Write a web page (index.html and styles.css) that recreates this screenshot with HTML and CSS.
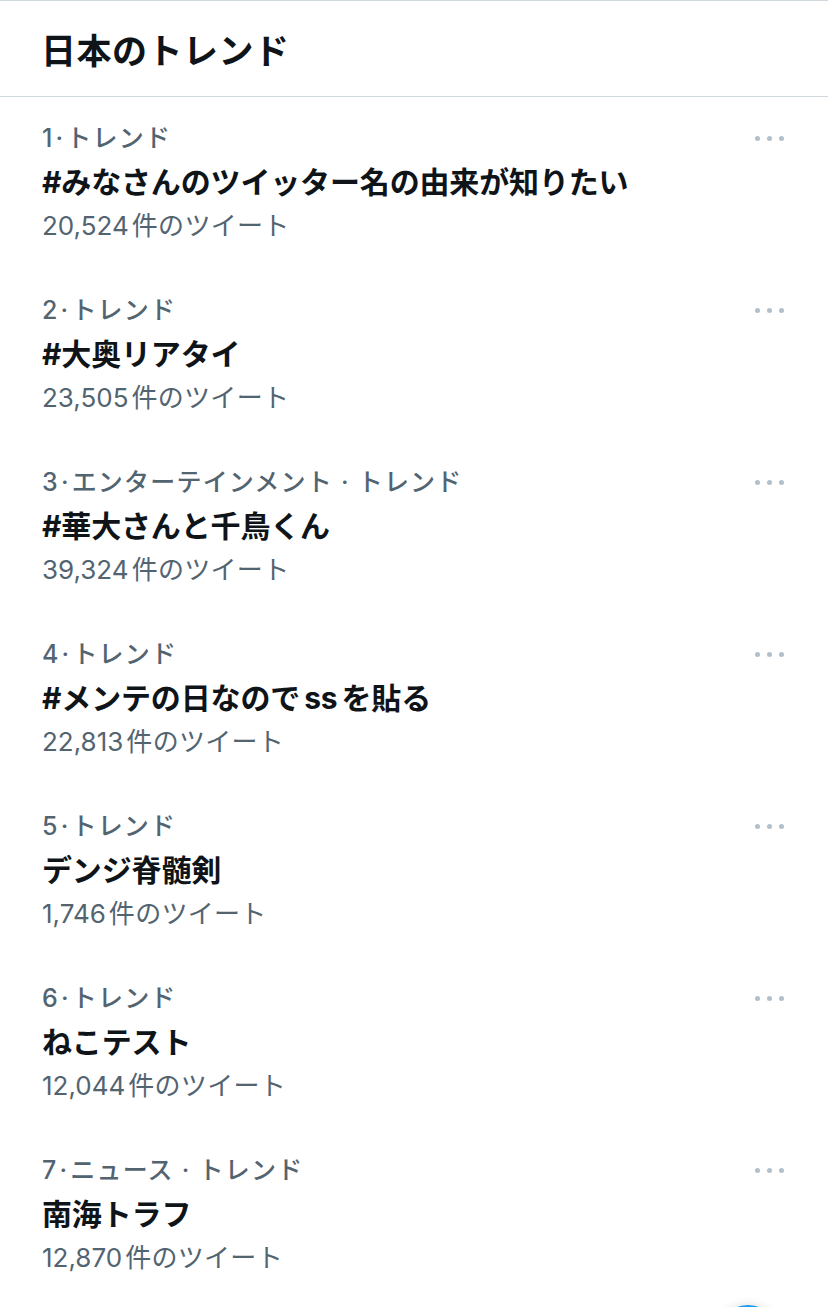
FILE: index.html
```html
<!DOCTYPE html>
<html lang="ja">
<head>
  <meta charset="UTF-8">
  <meta name="viewport" content="width=device-width, initial-scale=1.0">
  <title>日本のトレンド</title>
  <link rel="stylesheet" href="styles.css">
</head>

<body>
  <div class="page">
    <!-- Header -->
    <div class="header">
      <h2>日本のトレンド</h2>
    </div>

    <!-- Trend list -->
    <div class="trend">
      <div class="trend-body">
        <div class="meta">1<span class="dot">·</span>トレンド</div>
        <div class="title">#みなさんのツイッター名の由来が知りたい</div>
        <div class="count">20,524<span class="unit">件のツイート</span></div>
      </div>
      <div class="more"><span></span><span></span><span></span></div>
    </div>

    <div class="trend">
      <div class="trend-body">
        <div class="meta">2<span class="dot">·</span>トレンド</div>
        <div class="title">#大奥リアタイ</div>
        <div class="count">23,505<span class="unit">件のツイート</span></div>
      </div>
      <div class="more"><span></span><span></span><span></span></div>
    </div>

    <div class="trend">
      <div class="trend-body">
        <div class="meta">3<span class="dot">·</span>エンターテインメント<span class="sep">·</span>トレンド</div>
        <div class="title">#華大さんと千鳥くん</div>
        <div class="count">39,324<span class="unit">件のツイート</span></div>
      </div>
      <div class="more"><span></span><span></span><span></span></div>
    </div>

    <div class="trend">
      <div class="trend-body">
        <div class="meta">4<span class="dot">·</span>トレンド</div>
        <div class="title">#メンテの日なので<span class="latin">ss</span>を貼る</div>
        <div class="count">22,813<span class="unit">件のツイート</span></div>
      </div>
      <div class="more"><span></span><span></span><span></span></div>
    </div>

    <div class="trend">
      <div class="trend-body">
        <div class="meta">5<span class="dot">·</span>トレンド</div>
        <div class="title">デンジ脊髄剣</div>
        <div class="count">1,746<span class="unit">件のツイート</span></div>
      </div>
      <div class="more"><span></span><span></span><span></span></div>
    </div>

    <div class="trend">
      <div class="trend-body">
        <div class="meta">6<span class="dot">·</span>トレンド</div>
        <div class="title">ねこテスト</div>
        <div class="count">12,044<span class="unit">件のツイート</span></div>
      </div>
      <div class="more"><span></span><span></span><span></span></div>
    </div>

    <div class="trend">
      <div class="trend-body">
        <div class="meta">7<span class="dot">·</span>ニュース<span class="sep">·</span>トレンド</div>
        <div class="title">南海トラフ</div>
        <div class="count">12,870<span class="unit">件のツイート</span></div>
      </div>
      <div class="more"><span></span><span></span><span></span></div>
    </div>
  </div>

  <!-- Floating compose button (mostly off screen) -->
  <div class="fab"></div>
</body>
</html>
```

FILE: styles.css
```css
body {
  margin: 0;
  background: white;
  font-family: Inter, "Noto Sans CJK JP", sans-serif;
  color: #0f1419;
  overflow: hidden;
}

.page {
  border-top: 1px solid #cfd9de;
}

.header {
  height: 95px;
  border-bottom: 1px solid #cfd9de;
  padding: 0 41px;
  display: flex;
  align-items: center;
}

.header h2 {
  margin: 0;
  font-size: 35px;
  font-weight: 700;
  color: #0f1419;
  letter-spacing: 0.5px;
}

.trend {
  display: flex;
  justify-content: space-between;
  padding: 19px 42px 21px 42px;
}

.meta,
.title,
.count {
  height: 44px;
  line-height: 44px;
  white-space: nowrap;
}

.meta {
  font-size: 25px;
  font-weight: 500;
  color: #536471;
  letter-spacing: 1.2px;
}

.meta .dot {
  margin: 0 2px;
}

.meta .sep {
  margin: 0 8px;
}

.title {
  font-size: 30px;
  font-weight: 700;
  color: #0f1419;
  letter-spacing: -0.15px;
}

.title .latin {
  margin: 0 4px;
}

.count {
  font-size: 26px;
  color: #536471;
}

.count .unit {
  margin-left: 3px;
  font-size: 26px;
  letter-spacing: 0.3px;
}

.more {
  display: flex;
  gap: 7px;
  padding-top: 20px;
  margin-right: 2px;
}

.more span {
  width: 5px;
  height: 5px;
  border-radius: 50%;
  background: #b2c0cc;
}

.fab {
  position: fixed;
  left: 715px;
  top: 1305px;
  width: 66px;
  height: 66px;
  border-radius: 50%;
  background: #1d9bf0;
  box-shadow: 0 0 10px rgba(0, 0, 0, 0.15);
}
```
